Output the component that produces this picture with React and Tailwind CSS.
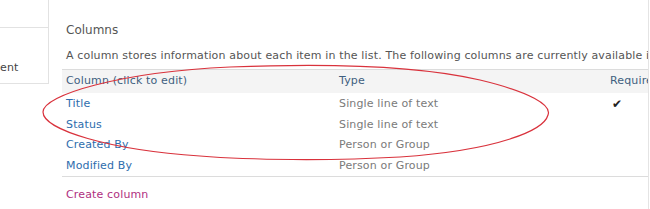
import React from "react";

const rows = [
  { name: "Title", type: "Single line of text", req: true },
  { name: "Status", type: "Single line of text", req: false },
  { name: "Created By", type: "Person or Group", req: false },
  { name: "Modified By", type: "Person or Group", req: false },
];

export default function App() {
  return (
    <div
      className="relative w-[650px] h-[209px] overflow-hidden bg-white flex"
      style={{ fontFamily: '"DejaVu Sans", Verdana, sans-serif' }}
    >
      {/* left nav fragment */}
      <div className="w-[49px] shrink-0">
        <div className="h-[84px] border-r border-[#e2e2e2] flex flex-col">
          <div className="h-[28px] border-b border-[#e2e2e2]" />
          <div className="flex-1 border-b border-[#e2e2e2] flex items-end pb-[10px]">
            <span className="text-[11px] text-[#444] leading-none tracking-[0.15px]">ent</span>
          </div>
        </div>
      </div>

      {/* main */}
      <div className="flex-1 min-w-0 overflow-hidden pl-[13px] border-r border-[#e4e4e4] mr-[1px] text-[11px] tracking-[0.15px]">
        <div className="pt-[22px] pl-[4px] text-[12px] leading-[16px] tracking-normal text-[#555]">Columns</div>
        <div className="mt-[11px] pl-[4px] leading-[14px] text-[#555] whitespace-nowrap">
          A column stores information about each item in the list. The following columns are currently available in this list:
        </div>
        <div className="mt-[6px] border-t border-b border-[#dcdcdc]">
          <div className="flex h-[23px] items-center bg-[#f4f4f4] text-[#3f5f7f] whitespace-nowrap">
            <div className="w-[277px] shrink-0 pl-[4px]">Column (click to edit)</div>
            <div className="w-[271px] shrink-0">Type</div>
            <div>Required</div>
          </div>
          <div className="pt-[1px]">
            {rows.map((r) => (
              <div key={r.name} className="flex h-[20.5px] items-center whitespace-nowrap">
                <div className="w-[277px] shrink-0 pl-[4px] text-[#2e6dad]">{r.name}</div>
                <div className="w-[273px] shrink-0 text-[#7a7a7a]">{r.type}</div>
                <div className="text-[#222] text-[12px] leading-none">{r.req ? "✔" : ""}</div>
              </div>
            ))}
          </div>
        </div>
        <div className="mt-[11px] pl-[4px] leading-[14px] text-[#b0307f]">Create column</div>
      </div>

      <svg
        className="absolute inset-0 pointer-events-none"
        width="650"
        height="209"
        viewBox="0 0 650 209"
      >
        <path
          d="M 43 112 C 43 95, 120 72, 230 67 C 330 63, 420 66, 480 80 C 530 92, 552 105, 548 115 C 544 130, 500 150, 400 157 C 330 161, 250 160, 200 156 C 110 150, 43 130, 43 112 Z"
          fill="none"
          stroke="#d9323c"
          strokeWidth="1.2"
        />
      </svg>
    </div>
  );
}
